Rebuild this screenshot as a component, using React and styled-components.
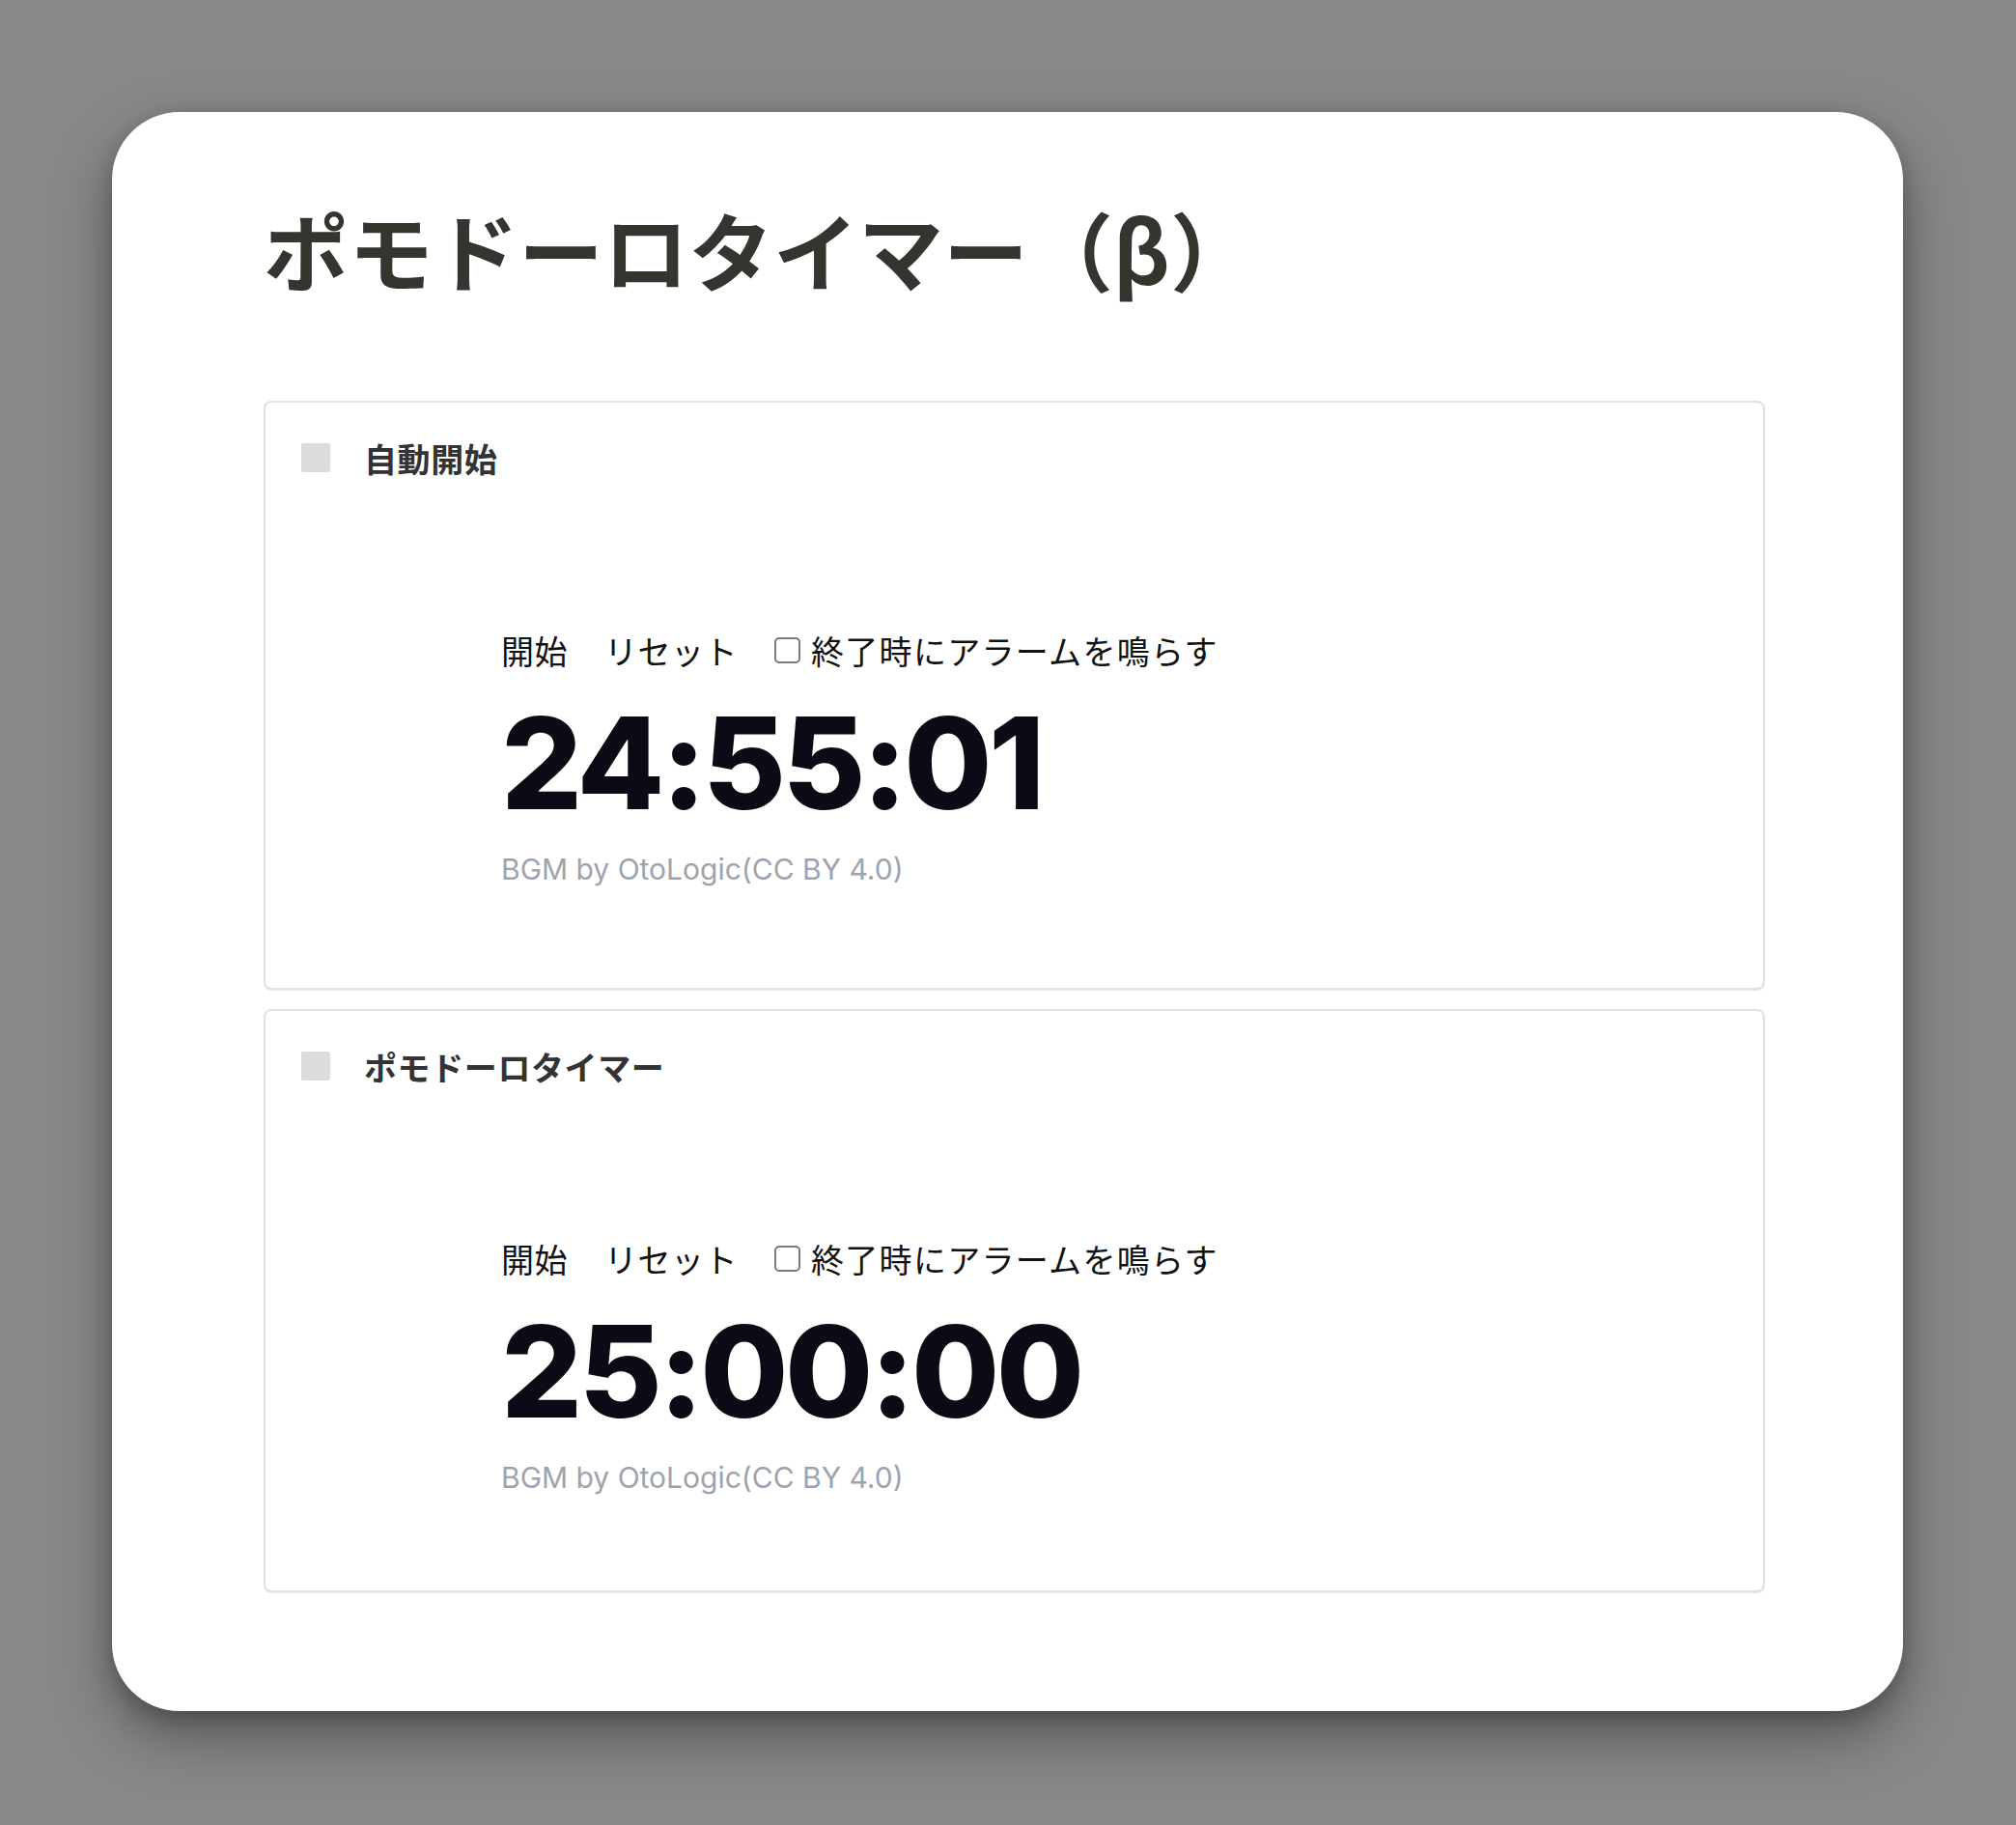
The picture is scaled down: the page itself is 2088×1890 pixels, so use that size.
import React, { useState } from 'react';
import styled, { createGlobalStyle } from 'styled-components';

const GlobalStyle = createGlobalStyle`
  html, body {
    margin: 0;
    padding: 0;
    background: #888888;
  }
  body {
    font-family: "Noto Sans CJK JP", "Noto Sans", sans-serif;
    min-height: 1890px;
  }
`;

const Window = styled.div`
  box-sizing: border-box;
  width: 1855px;
  height: 1656px;
  margin: 116px 0 0 116px;
  padding: 88px 0 0 157px;
  background: #ffffff;
  border-radius: 70px;
  box-shadow: 0 26px 60px rgba(0, 0, 0, 0.36), 0 8px 20px rgba(0, 0, 0, 0.2);
`;

const Title = styled.h1`
  margin: 0 0 105px;
  font-family: "Noto Sans CJK JP", sans-serif;
  font-size: 88px;
  font-weight: 700;
  line-height: 1.2;
  color: #35342f;
`;

const PanelList = styled.div`
  display: flex;
  flex-direction: column;
  gap: 20px;
  width: 1555px;
`;

const Panel = styled.section`
  box-sizing: border-box;
  height: ${({ $compact }) => ($compact ? '604px' : '610px')};
  border: 2px solid #e2e2e2;
  border-radius: 8px;
  box-shadow: 0 1px 0 #e6e6e6;
`;

const PanelHeader = styled.div`
  display: flex;
  align-items: center;
  gap: 35px;
  padding: 32px 0 0 37px;
`;

const Marker = styled.span`
  width: 30px;
  height: 30px;
  border-radius: 2px;
  background: #dcdcdc;
`;

const PanelTitle = styled.h2`
  margin: 0;
  font-size: 34px;
  font-weight: 700;
  line-height: 51px;
  letter-spacing: 0.6px;
  color: #333333;
`;

const Body = styled.div`
  padding: 148px 0 0 244px;
`;

const Controls = styled.div`
  display: flex;
  align-items: center;
  gap: 38px;
  height: 51px;
`;

const PlainButton = styled.button`
  padding: 0;
  border: none;
  background: none;
  font-family: "Noto Sans CJK JP", sans-serif;
  font-size: 34px;
  line-height: 51px;
  letter-spacing: 0.5px;
  color: #111111;
  cursor: pointer;
`;

const AlarmLabel = styled.label`
  display: flex;
  align-items: center;
  gap: 11px;
  font-size: 34px;
  line-height: 51px;
  letter-spacing: 1.3px;
  color: #111111;
`;

const Check = styled.input`
  appearance: none;
  box-sizing: border-box;
  width: 27px;
  height: 27px;
  margin: 0;
  border: 2px solid #7a7a7a;
  border-radius: 5px;
  background: #fff;

  &:checked {
    background: #0a66ff;
    border-color: #0a66ff;
  }
`;

const Clock = styled.div`
  margin-top: 25px;
  font-family: Inter, "Liberation Sans", sans-serif;
  font-size: 132px;
  font-weight: 800;
  line-height: 132px;
  letter-spacing: -3.5px;
  color: #0a0b15;
`;

const Credit = styled.div`
  margin-top: 22px;
  font-family: Inter, "Liberation Sans", sans-serif;
  font-size: 30px;
  line-height: 45px;
  color: #9ea3ad;
`;

const TimerPanel = ({ title, time, compact }) => {
  const [alarm, setAlarm] = useState(false);

  return (
    <Panel $compact={compact}>
      <PanelHeader>
        <Marker />
        <PanelTitle>{title}</PanelTitle>
      </PanelHeader>
      <Body>
        <Controls>
          <PlainButton>開始</PlainButton>
          <PlainButton>リセット</PlainButton>
          <AlarmLabel>
            <Check type="checkbox" checked={alarm} onChange={(e) => setAlarm(e.target.checked)} />
            終了時にアラームを鳴らす
          </AlarmLabel>
        </Controls>
        <Clock>{time}</Clock>
        <Credit>BGM by OtoLogic(CC BY 4.0)</Credit>
      </Body>
    </Panel>
  );
};

const App = () => (
  <>
    <GlobalStyle />
    <Window>
      <Title>ポモドーロタイマー（β）</Title>
      <PanelList>
        <TimerPanel title="自動開始" time="24:55:01" />
        <TimerPanel title="ポモドーロタイマー" time="25:00:00" compact />
      </PanelList>
    </Window>
  </>
);

export default App;
